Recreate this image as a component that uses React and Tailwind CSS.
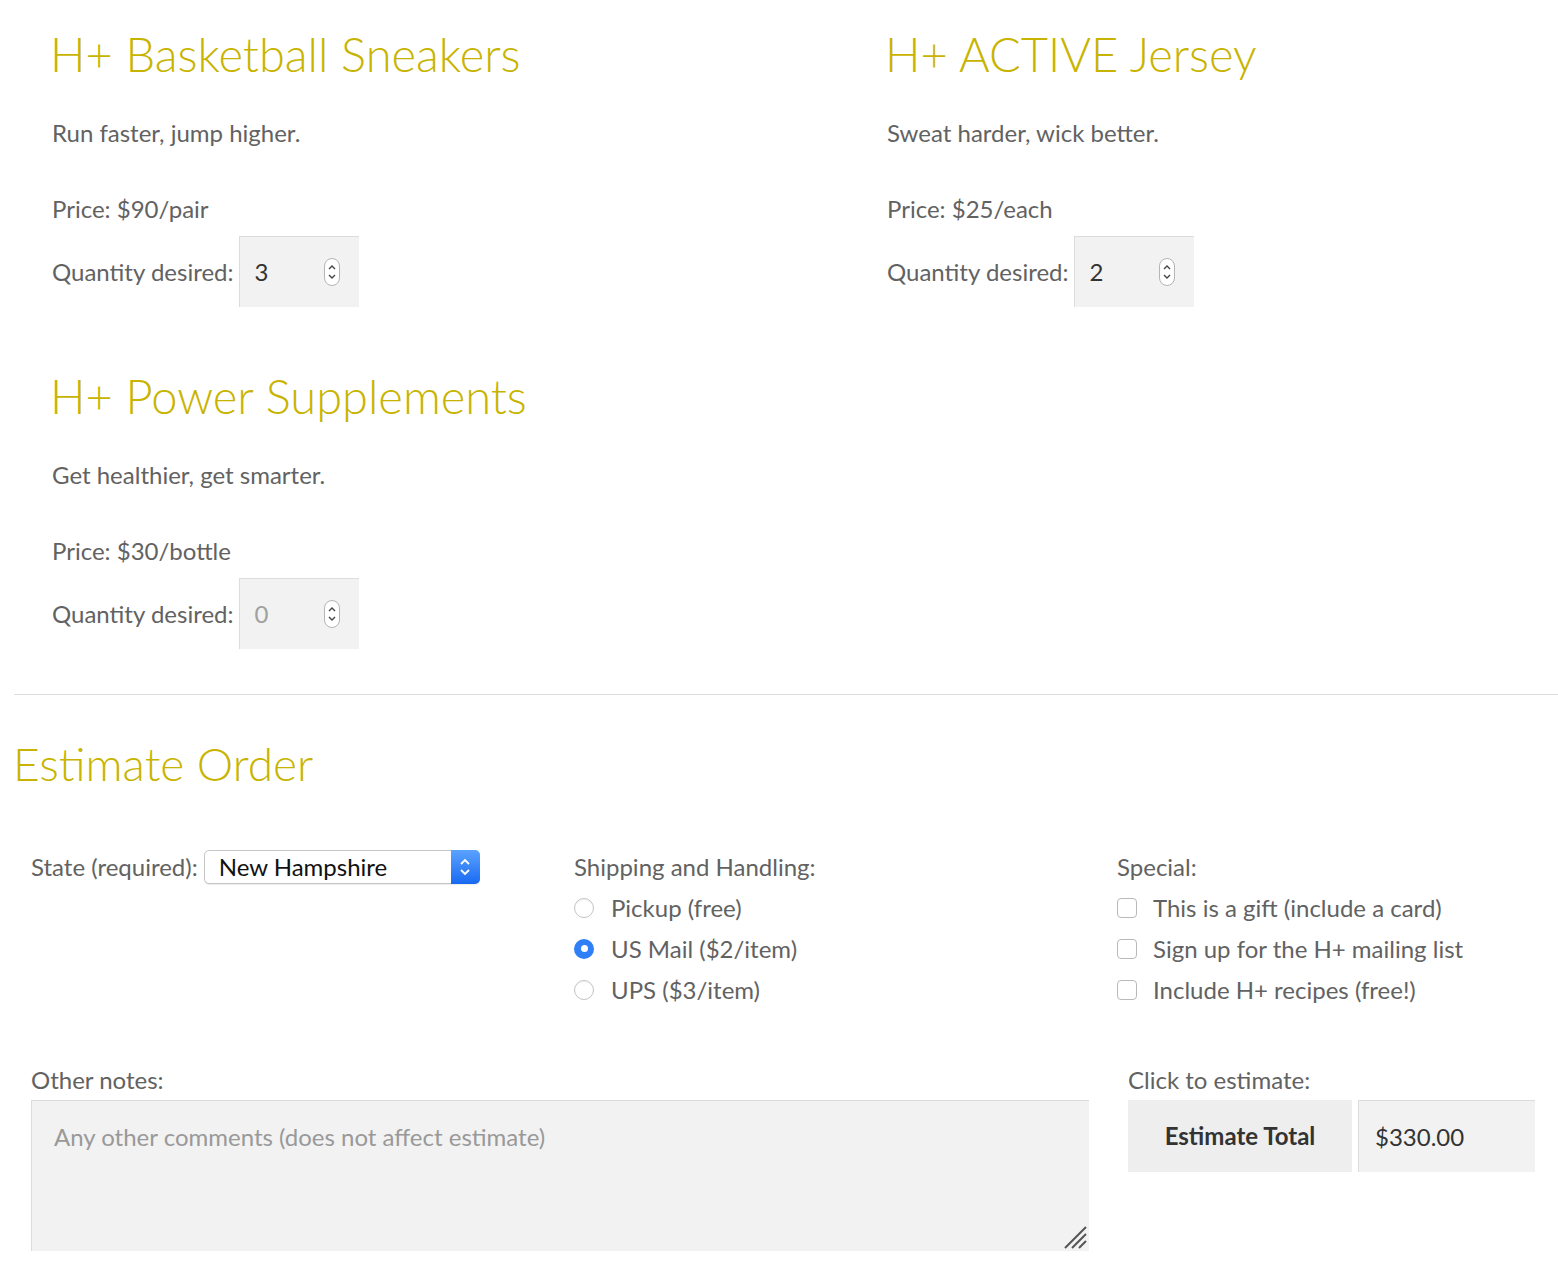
import React from "react";

const Spinner = () => (
  <svg width="16" height="28" viewBox="0 0 16 28" className="shrink-0">
    <rect x="0.5" y="0.5" width="15" height="27" rx="7.5" fill="#fff" stroke="#b5b5b5" />
    <path d="M5 11 L8 8 L11 11" fill="none" stroke="#444" strokeWidth="1.4" />
    <path d="M5 17 L8 20 L11 17" fill="none" stroke="#444" strokeWidth="1.4" />
  </svg>
);

const QtyInput = ({ value, muted }) => (
  <div className="w-[120px] h-[71px] bg-[#f2f2f2] border-t border-l border-[#dcdcdc] flex items-center pl-[15px] pr-[19px]">
    <span className={`flex-1 ${muted ? "text-[#a0a0a0]" : "text-[#333]"}`}>{value}</span>
    <Spinner />
  </div>
);

const Product = ({ title, tagline, price, qty, muted }) => (
  <div className="h-[281px]">
    <h2 className="-ml-[2px] text-[47px] leading-[56px] font-light text-[#c8b400]">{title}</h2>
    <p className="mt-[35px] leading-[32px]">{tagline}</p>
    <p className="mt-[44px] leading-[32px]">{price}</p>
    <div className="mt-[11px] flex items-center">
      <span className="mr-[5px]">Quantity desired:</span>
      <QtyInput value={qty} muted={muted} />
    </div>
  </div>
);

const Radio = ({ checked }) => (
  checked ? (
    <span className="w-[20px] h-[20px] rounded-full bg-[#2f7ff7] flex items-center justify-center shrink-0">
      <span className="w-[7px] h-[7px] rounded-full bg-white" />
    </span>
  ) : (
    <span className="w-[20px] h-[20px] rounded-full border border-[#c4c4c4] bg-white shrink-0 shadow-[inset_0_1px_1px_rgba(0,0,0,0.06)]" />
  )
);

const Checkbox = () => (
  <span className="w-[20px] h-[20px] rounded-[4px] border border-[#b9b9b9] bg-white shrink-0" />
);

export default function App() {
  return (
    <div className="min-h-screen bg-white text-[#626262] text-[24px] pb-[26px]" style={{ fontFamily: "Lato, 'Liberation Sans', sans-serif" }}>
      {/* products */}
      <div className="pt-[26px] pl-[52px] grid grid-cols-[835px_1fr] gap-y-[61px]">
        <Product title="H+ Basketball Sneakers" tagline="Run faster, jump higher." price="Price: $90/pair" qty="3" />
        <Product title="H+ ACTIVE Jersey" tagline="Sweat harder, wick better." price="Price: $25/each" qty="2" />
        <Product title="H+ Power Supplements" tagline="Get healthier, get smarter." price="Price: $30/bottle" qty="0" muted />
      </div>

      <div className="ml-[14px] mt-[45px] border-t border-[#dedede]">
        <h2 className="mt-[41px] -ml-[1px] text-[46px] leading-[56px] font-light text-[#c8b400]">Estimate Order</h2>

        {/* options */}
        <div className="mt-[59px] pl-[17px] grid grid-cols-[543px_543px_1fr]">
          <div className="flex items-center h-[32px]">
            <span className="mr-[6px]">State (required):</span>
            <div className="w-[276px] h-[34px] rounded-[5px] border border-[#c6c6c6] bg-white flex items-center shadow-[0_1px_1px_rgba(0,0,0,0.08)]">
              <span className="flex-1 pl-[14px] text-[#111]">New Hampshire</span>
              <span className="w-[29px] h-[34px] -mr-px rounded-r-[5px] bg-gradient-to-b from-[#5aa2ff] to-[#1769f2] flex items-center justify-center">
                <svg width="12" height="20" viewBox="0 0 12 20">
                  <path d="M2 7 L6 3 L10 7" fill="none" stroke="#fff" strokeWidth="1.8" />
                  <path d="M2 13 L6 17 L10 13" fill="none" stroke="#fff" strokeWidth="1.8" />
                </svg>
              </span>
            </div>
          </div>

          <div>
            <div className="h-[32px] leading-[32px]">Shipping and Handling:</div>
            <div className="mt-[4px]">
              {[["Pickup (free)", false], ["US Mail ($2/item)", true], ["UPS ($3/item)", false]].map(([t, c]) => (
                <div key={t} className="h-[41px] flex items-center">
                  <Radio checked={c} />
                  <span className="ml-[17px]">{t}</span>
                </div>
              ))}
            </div>
          </div>

          <div>
            <div className="h-[32px] leading-[32px]">Special:</div>
            <div className="mt-[4px]">
              {["This is a gift (include a card)", "Sign up for the H+ mailing list", "Include H+ recipes (free!)"].map((t) => (
                <div key={t} className="h-[41px] flex items-center">
                  <Checkbox />
                  <span className="ml-[16px]">{t}</span>
                </div>
              ))}
            </div>
          </div>
        </div>

        {/* notes + estimate */}
        <div className="mt-[54px] pl-[17px] flex">
          <div className="w-[1058px]">
            <div className="leading-[32px]">Other notes:</div>
            <div className="relative mt-[4px] h-[151px] bg-[#f2f2f2] border-t border-l border-[#dcdcdc] pl-[22px] pt-[20px] leading-[32px] text-[#999]">
              Any other comments (does not affect estimate)
              <svg className="absolute right-[2px] bottom-[2px]" width="26" height="26" viewBox="0 0 26 26">
                <path d="M4 25 L25 4 M11 25 L25 11 M18 25 L25 18" stroke="#555" strokeWidth="2" />
              </svg>
            </div>
          </div>
          <div className="ml-[39px]">
            <div className="leading-[32px]">Click to estimate:</div>
            <div className="mt-[4px] flex gap-[6px]">
              <div className="w-[224px] h-[72px] bg-[#eeeeee] flex items-center justify-center font-bold text-[#333]">Estimate Total</div>
              <div className="w-[177px] h-[72px] bg-[#f2f2f2] border-t border-l border-[#dcdcdc] flex items-center pl-[16px] text-[#333]">$330.00</div>
            </div>
          </div>
        </div>
      </div>
    </div>
  );
}
